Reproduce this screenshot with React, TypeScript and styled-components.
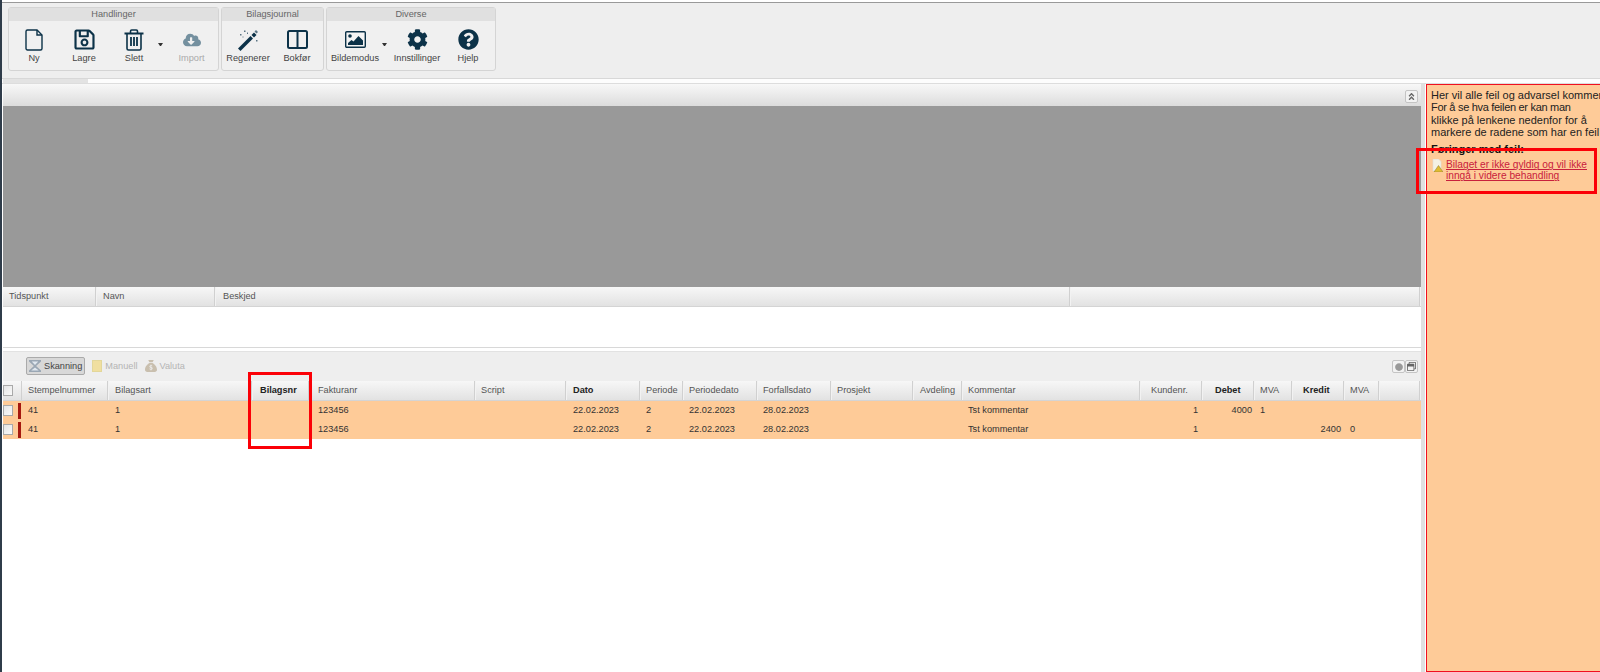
import React from "react";
import styled, { createGlobalStyle, css } from "styled-components";
import {
  FaRegSave,
  FaCloudDownloadAlt,
  FaCog,
  FaQuestionCircle,
  FaAngleDoubleUp,
  FaCircle,
  FaRegWindowRestore,
} from "react-icons/fa";
import { FaSackDollar } from "react-icons/fa6";

const GlobalStyle = createGlobalStyle`
  html, body { margin: 0; padding: 0; background: #fff; overflow: hidden; }
  body { font-family: "Liberation Sans", Arial, sans-serif; font-size: 9.2px; color: #333; }
  * { box-sizing: border-box; }
`;

const Page = styled.div`
  position: relative;
  width: 1600px;
  height: 672px;
  display: flex;
  flex-direction: column;
  overflow: hidden;
  border-left: 2px solid #2f3c4a;
`;

const TopRule = styled.div`
  height: 3px;
  flex: none;
  background: #fff;
  border-bottom: 1px solid #999;
`;

const Toolbar = styled.div`
  height: 76px;
  flex: none;
  display: flex;
  gap: 2px;
  padding: 4px 6px;
  background: #eee;
  border-bottom: 1px solid #d8d8d8;
`;

const Group = styled.div<{ $w: number }>`
  width: ${(p) => p.$w}px;
  height: 64px;
  display: flex;
  flex-direction: column;
  border: 1px solid #d4d4d4;
  border-radius: 3px;
  background: #f0f0f0;
`;

const GroupTitle = styled.div`
  height: 13px;
  flex: none;
  text-align: center;
  line-height: 12px;
  background: #e0e0e0;
  color: #666;
`;

const GroupBody = styled.div`
  display: flex;
  flex: 1;
`;

const ToolButton = styled.div<{ $w: number; $off?: boolean }>`
  width: ${(p) => p.$w}px;
  flex: none;
  display: flex;
  flex-direction: column;
  align-items: center;
  padding-top: 7px;
  color: ${(p) => (p.$off ? "#aaa" : "#444")};
  white-space: nowrap;
`;

const IconSlot = styled.div<{ $off?: boolean }>`
  height: 23px;
  margin-bottom: 2px;
  display: flex;
  align-items: center;
  justify-content: center;
  color: ${(p) => (p.$off ? "#74909f" : "#0c3248")};
  font-size: 21px;
`;

const Caret = styled.div`
  width: 5px;
  height: 3px;
  flex: none;
  align-self: flex-start;
  margin: 22px 0 0 -1px;
  border-top: 3px solid #333;
  border-left: 2.5px solid transparent;
  border-right: 2.5px solid transparent;
`;

const ScrollStrip = styled.div`
  height: 5px;
  flex: none;
  background: #fdfdfd;
  border-bottom: 1px solid #ddd;
`;

const ScrollThumb = styled.div`
  width: 85px;
  height: 100%;
  margin-left: 1px;
  background: #e3e3e3;
`;

const Main = styled.div`
  flex: 1;
  display: flex;
  min-height: 0;
`;

const LeftColumn = styled.div`
  width: 1419px;
  flex: none;
  display: flex;
  flex-direction: column;
  padding-left: 1px;
`;

const PanelHeader = styled.div`
  height: 22px;
  flex: none;
  display: flex;
  justify-content: flex-end;
  padding: 6px 3px 0 0;
  background: linear-gradient(#f8f8f8, #dcdcdc);
`;

const MiniButton = styled.div`
  width: 13px;
  height: 13px;
  display: flex;
  align-items: center;
  justify-content: center;
  background: #f2f2f2;
  border: 1px solid #c4c4c4;
  border-radius: 2px;
  color: #666;
  font-size: 9px;
`;

const GreyArea = styled.div`
  height: 181px;
  flex: none;
  background: #999;
`;

const HeaderRow = styled.div<{ $cols: string }>`
  height: 20px;
  flex: none;
  display: grid;
  grid-template-columns: ${(p) => p.$cols};
  background: linear-gradient(#f7f7f7, #e2e2e2);
  border-bottom: 1px solid #d4d4d4;
`;

const HeaderCell = styled.div<{ $bold?: boolean; $indent?: number }>`
  padding-left: ${(p) => p.$indent ?? 6}px;
  line-height: 19px;
  white-space: nowrap;
  overflow: hidden;
  color: #555;
  border-right: 1px solid #f2f2f2;
  box-shadow: inset -1px 0 0 #d0d0d0;
  ${(p) =>
    p.$bold &&
    css`
      font-weight: 700;
      color: #222;
    `}
`;

const LogBody = styled.div`
  height: 40px;
  flex: none;
  background: #fff;
`;

const PanelGap = styled.div`
  height: 5px;
  flex: none;
  background: #fff;
  border-top: 1px solid #d8d8d8;
  border-bottom: 1px solid #e2e2e2;
`;

const GridToolbar = styled.div`
  height: 29px;
  flex: none;
  display: flex;
  align-items: center;
  gap: 7px;
  padding: 0 3px 0 23px;
  background: #eee;
`;

const ModeButton = styled.div<{ $active?: boolean }>`
  height: 18px;
  display: flex;
  align-items: center;
  gap: 3px;
  margin-top: -2px;
  padding: 0 ${(p) => (p.$active ? "2px" : "0")};
  color: ${(p) => (p.$active ? "#444" : "#b4b4b4")};
  ${(p) =>
    p.$active &&
    css`
      background: #d8d8d8;
      border: 1px solid #aaa;
      border-radius: 2px;
    `}
`;

const NoteSquare = styled.span`
  width: 10px;
  height: 12px;
  background: #f0dfa0;
  border: 1px solid #e3d79a;
`;

const GridTools = styled.div`
  margin-left: auto;
  display: flex;
  gap: 0;
`;

const DataRow = styled.div<{ $cols: string }>`
  height: 19px;
  flex: none;
  display: grid;
  grid-template-columns: ${(p) => p.$cols};
  background: #fecb98;
`;

const DataCell = styled.div<{ $right?: boolean; $indent?: number; $pad?: number }>`
  padding-left: ${(p) => p.$indent ?? 6}px;
  padding-right: ${(p) => p.$pad ?? 0}px;
  line-height: 18px;
  text-align: ${(p) => (p.$right ? "right" : "left")};
  white-space: nowrap;
  color: #333;
`;

const CheckCol = styled.div`
  display: flex;
  align-items: center;
  box-shadow: inset -1px 0 0 #d0d0d0;
`;

const CheckBox = styled.span`
  width: 10px;
  height: 11px;
  flex: none;
  background: linear-gradient(135deg, #e4e4e4, #fafafa);
  border: 1px solid #a9a9a9;
`;

const ErrorMark = styled.span`
  width: 3px;
  height: 16px;
  margin-left: 5px;
  background: #a5180f;
`;

const RowCheck = styled.div`
  display: flex;
  align-items: center;
  height: 100%;
`;

const Splitter = styled.div`
  width: 5px;
  flex: none;
  background: linear-gradient(90deg, #e0e0e0 70%, #fff 70%);
`;

const MessagePanel = styled.div`
  width: 190px;
  flex: none;
  padding: 4px 0 0 4px;
  background: #fecb98;
  border: 1px solid #f0101f;
  font-size: 11px;
  line-height: 12.3px;
  color: #222;
  white-space: nowrap;
`;

const MessageLine = styled.div<{ $track?: number }>`
  letter-spacing: ${(p) => p.$track ?? 0}px;
`;

const MessageTitle = styled.div`
  margin-top: 5px;
  font-weight: 700;
  color: #111;
`;

const MessageLink = styled.div`
  display: flex;
  gap: 3px;
  margin-top: 4px;
  padding-left: 1px;
  font-size: 10.2px;
  line-height: 11px;
  color: #c8203c;
  text-decoration: underline;
`;

const Callout = styled.div<{ $x: number; $y: number; $w: number; $h: number }>`
  position: absolute;
  left: ${(p) => p.$x - 2}px;
  top: ${(p) => p.$y}px;
  width: ${(p) => p.$w}px;
  height: ${(p) => p.$h}px;
  border: 3px solid #fb0007;
  pointer-events: none;
`;

const NewFileIcon = () => (
  <svg width="18" height="22" viewBox="0 0 18 22" fill="none" stroke="currentColor" strokeWidth="1.4">
    <path d="M2.5 1h9.5l5 5v13.5a1.5 1.5 0 0 1-1.5 1.5h-13A1.5 1.5 0 0 1 1 19.500V2.500A1.500 1.500 0 0 1 2.500 1z" />
    <path d="M12 1v5h5" />
  </svg>
);

const TrashIcon = () => (
  <svg width="20" height="22" viewBox="0 0 20 22" fill="none" stroke="currentColor" strokeWidth="1.6">
    <path d="M0.500 4.500h19" strokeWidth="2" />
    <path d="M6.500 4V2.200C6.500 1.500 7 1 7.700 1h4.600c.7 0 1.200.5 1.200 1.200V4" />
    <path d="M3 5v14.500C3 20.300 3.700 21 4.500 21h11c.8 0 1.500-.7 1.500-1.500V5" />
    <path d="M7 8v9M10 8v9M13 8v9" strokeWidth="1.800" />
  </svg>
);

const WandIcon = () => (
  <svg width="22" height="22" viewBox="0 0 22 22">
    <path d="M1 19.500 13.500 7l2.500 2.500L3.500 22z" fill="currentColor" />
    <path d="M14.500 6 17 3.500l2.500 2.500L17 8.500z" fill="currentColor" />
    <path d="M17.500 2.500 19 1l2 2-1.500 1.500z" fill="#5b7483" />
    <path d="M7 1.500h1.500V3H7zM3 5h1.500v1.500H3zM10 3.500h1V5h-1zM19 11h1.500v1.500H19zM5.500 7.500h1v1h-1z" fill="#5b7483" />
  </svg>
);

const BookIcon = () => (
  <svg width="21" height="19" viewBox="0 0 21 19" fill="none" stroke="currentColor" strokeWidth="2">
    <rect x="1" y="1" width="19" height="17" rx="1.500" />
    <path d="M10.500 1v17" />
  </svg>
);

const ImageIcon = () => (
  <svg width="21" height="17" viewBox="0 0 21 17">
    <rect x="0.700" y="0.700" width="19.600" height="15.600" rx="1" fill="#f4f4f4" stroke="currentColor" strokeWidth="1.400" />
    <circle cx="5" cy="5" r="1.800" fill="currentColor" />
    <path d="M3 14v-2l3.500-3 2 1.500L13.500 5 18 9.500V14z" fill="currentColor" />
  </svg>
);

const HourglassIcon = () => (
  <svg width="12" height="12" viewBox="0 0 11 12" preserveAspectRatio="none">
    <path d="M0 0h11v1.500L6.500 6 11 10.500V12H0v-1.500L4.500 6 0 1.500z" fill="#9aa7b4" />
    <path d="M2.500 1.500h6L5.500 5zM2 10.500 5.500 7.500l3.500 3z" fill="#dfe7ef" />
  </svg>
);

const WarnDocIcon = () => (
  <svg width="11" height="13" viewBox="0 0 11 13" style={{ flex: "none" }}>
    <path d="M1 0h5.500L9 2.500V12H1z" fill="#f4f1e4" stroke="#ddd" strokeWidth="0.600" />
    <path d="M6.500 6.500l4.500 6.500H2z" fill="#e0bc30" stroke="#8a7a30" strokeWidth="0.500" />
  </svg>
);

const gridCols =
  "19px 87px 144px 57px 166px 91px 74px 43px 74px 74px 82px 49px 178px 62px 52px 38px 52px 35px 1fr";
const logCols = "94px 119px 855px 1fr";

const columns = [
  { label: "Stempelnummer" },
  { label: "Bilagsart" },
  { label: "Bilagsnr", bold: true, indent: 7 },
  { label: "Fakturanr", indent: 8 },
  { label: "Script", indent: 5 },
  { label: "Dato", bold: true },
  { label: "Periode", indent: 5 },
  { label: "Periodedato", indent: 5 },
  { label: "Forfallsdato", indent: 5 },
  { label: "Prosjekt", indent: 5 },
  { label: "Avdeling" },
  { label: "Kommentar", indent: 5 },
  { label: "Kundenr.", indent: 10 },
  { label: "Debet", bold: true, indent: 12 },
  { label: "MVA", indent: 5 },
  { label: "Kredit", bold: true, indent: 10 },
  { label: "MVA", indent: 5 },
  { label: "" },
];

const rows = [
  { debet: "4000", mva1: "1", kredit: "", mva2: "" },
  { debet: "", mva1: "", kredit: "2400", mva2: "0" },
];

export default function App() {
  return (
    <>
      <GlobalStyle />
      <Page>
        <TopRule />
        <Toolbar>
          <Group $w={211}>
            <GroupTitle>Handlinger</GroupTitle>
            <GroupBody>
              <ToolButton $w={50}>
                <IconSlot><NewFileIcon /></IconSlot>Ny
              </ToolButton>
              <ToolButton $w={50}>
                <IconSlot><FaRegSave size={23} /></IconSlot>Lagre
              </ToolButton>
              <ToolButton $w={50}>
                <IconSlot><TrashIcon /></IconSlot>Slett
              </ToolButton>
              <Caret />
              <ToolButton $w={57} $off>
                <IconSlot $off><FaCloudDownloadAlt size={18} /></IconSlot>Import
              </ToolButton>
            </GroupBody>
          </Group>
          <Group $w={103}>
            <GroupTitle>Bilagsjournal</GroupTitle>
            <GroupBody>
              <ToolButton $w={52}>
                <IconSlot><WandIcon /></IconSlot>Regenerer
              </ToolButton>
              <ToolButton $w={46}>
                <IconSlot><BookIcon /></IconSlot>Bokfør
              </ToolButton>
            </GroupBody>
          </Group>
          <Group $w={170}>
            <GroupTitle>Diverse</GroupTitle>
            <GroupBody>
              <ToolButton $w={56}>
                <IconSlot><ImageIcon /></IconSlot>Bildemodus
              </ToolButton>
              <Caret />
              <ToolButton $w={60}>
                <IconSlot><FaCog /></IconSlot>Innstillinger
              </ToolButton>
              <ToolButton $w={42}>
                <IconSlot><FaQuestionCircle /></IconSlot>Hjelp
              </ToolButton>
            </GroupBody>
          </Group>
        </Toolbar>
        <ScrollStrip>
          <ScrollThumb />
        </ScrollStrip>
        <Main>
          <LeftColumn>
            <PanelHeader>
              <MiniButton><FaAngleDoubleUp /></MiniButton>
            </PanelHeader>
            <GreyArea />
            <HeaderRow $cols={logCols}>
              <HeaderCell>Tidspunkt</HeaderCell>
              <HeaderCell>Navn</HeaderCell>
              <HeaderCell $indent={7}>Beskjed</HeaderCell>
              <HeaderCell />
            </HeaderRow>
            <LogBody />
            <PanelGap />
            <GridToolbar>
              <ModeButton $active>
                <HourglassIcon />
                Skanning
              </ModeButton>
              <ModeButton>
                <NoteSquare />
                Manuell
              </ModeButton>
              <ModeButton>
                <FaSackDollar size={12} color="#c9bfae" />
                Valuta
              </ModeButton>
              <GridTools>
                <MiniButton><FaCircle size={8} color="#999" /></MiniButton>
                <MiniButton><FaRegWindowRestore size={9} /></MiniButton>
              </GridTools>
            </GridToolbar>
            <HeaderRow $cols={gridCols}>
              <CheckCol>
                <CheckBox />
              </CheckCol>
              {columns.map((c, i) => (
                <HeaderCell key={i} $bold={c.bold} $indent={c.indent}>
                  {c.label}
                </HeaderCell>
              ))}
            </HeaderRow>
            {rows.map((r, i) => (
              <DataRow key={i} $cols={gridCols}>
                <RowCheck>
                  <CheckBox />
                  <ErrorMark />
                </RowCheck>
                <DataCell>41</DataCell>
                <DataCell>1</DataCell>
                <DataCell />
                <DataCell $indent={8}>123456</DataCell>
                <DataCell />
                <DataCell>22.02.2023</DataCell>
                <DataCell $indent={5}>2</DataCell>
                <DataCell $indent={5}>22.02.2023</DataCell>
                <DataCell $indent={5}>28.02.2023</DataCell>
                <DataCell />
                <DataCell />
                <DataCell $indent={5}>Tst kommentar</DataCell>
                <DataCell $right $pad={5}>1</DataCell>
                <DataCell $right $pad={3}>{r.debet}</DataCell>
                <DataCell $indent={5}>{r.mva1}</DataCell>
                <DataCell $right $pad={4}>{r.kredit}</DataCell>
                <DataCell $indent={5}>{r.mva2}</DataCell>
                <DataCell />
              </DataRow>
            ))}
          </LeftColumn>
          <Splitter />
          <MessagePanel>
            <MessageLine>Her vil alle feil og advarsel kommer</MessageLine>
            <MessageLine $track={-0.3}>For å se hva feilen er kan man</MessageLine>
            <MessageLine>klikke på lenkene nedenfor for å</MessageLine>
            <MessageLine>markere de radene som har en feil</MessageLine>
            <MessageTitle>Føringer med feil:</MessageTitle>
            <MessageLink>
              <WarnDocIcon />
              <span>
                Bilaget er ikke gyldig og vil ikke
                <br />
                inngå i videre behandling
              </span>
            </MessageLink>
          </MessagePanel>
        </Main>
        <Callout $x={248} $y={372} $w={64} $h={77} />
        <Callout $x={1416} $y={148} $w={181} $h={46} />
      </Page>
    </>
  );
}
